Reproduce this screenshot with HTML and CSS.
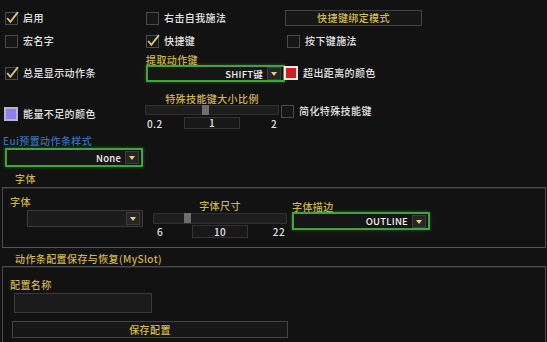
FILE: index.html
```html
<!DOCTYPE html>
<html lang="zh">
<head>
    <meta charset="UTF-8">
    <title>动作条设置</title>
    <link rel="stylesheet" href="styles.css">
</head>
<body>
    <div class="panel">
        <div class="row r1">
            <label class="opt c1"><span class="box"><svg viewBox="0 0 13 13"><path d="M2 6.5 L5 10 L12 1"/></svg></span>启用</label>
            <label class="opt c2"><span class="box"></span>右击自我施法</label>
            <button class="btn bind">快捷键绑定模式</button>
        </div>

        <div class="row r2">
            <label class="opt c1"><span class="box"></span>宏名字</label>
            <label class="opt c2"><span class="box"><svg viewBox="0 0 13 13"><path d="M2 6.5 L5 10 L12 1"/></svg></span>快捷键</label>
            <label class="opt c3"><span class="box"></span>按下键施法</label>
        </div>

        <div class="row r3">
            <label class="opt c1 low"><span class="box"><svg viewBox="0 0 13 13"><path d="M2 6.5 L5 10 L12 1"/></svg></span>总是显示动作条</label>
            <div class="field c2">
                <div class="cap">提取动作键</div>
                <div class="drop green w-key"><span>SHIFT键</span><i class="arrow"></i></div>
            </div>
            <label class="opt c3 low swatch-opt"><span class="swatch red"></span>超出距离的颜色</label>
        </div>

        <div class="row r4">
            <label class="opt c1 swatch-opt power"><span class="swatch purple"></span>能量不足的颜色</label>
            <div class="field c2 scale">
                <div class="cap center">特殊技能键大小比例</div>
                <div class="slider"><span class="thumb thumb-scale"></span></div>
                <div class="values">
                    <span>0.2</span>
                    <span class="val">1</span>
                    <span class="right">2</span>
                </div>
            </div>
            <label class="opt c3 simple"><span class="box"></span>简化特殊技能键</label>
        </div>

        <div class="cap blue">Eui预置动作条样式</div>
        <div class="drop green w-style"><span>None</span><i class="arrow"></i></div>
    </div>

    <div class="sec-head">字体</div>
    <div class="sec font-sec">
        <div class="col font-name">
            <div class="cap">字体</div>
            <div class="drop plain w-font"><span></span><i class="arrow"></i></div>
        </div>
        <div class="col font-size">
            <div class="cap center">字体尺寸</div>
            <div class="slider"><span class="thumb thumb-size"></span></div>
            <div class="values">
                <span class="left">6</span>
                <span class="val">10</span>
                <span class="right">22</span>
            </div>
        </div>
        <div class="col font-outline">
            <div class="cap">字体描边</div>
            <div class="drop green w-outline"><span>OUTLINE</span><i class="arrow"></i></div>
        </div>
    </div>

    <div class="sec-head slot-head">动作条配置保存与恢复(MySlot)</div>
    <div class="sec slot-sec">
        <div class="cap">配置名称</div>
        <input class="name-input" type="text">
        <button class="btn save">保存配置</button>
    </div>
</body>
</html>
```

FILE: styles.css
```css
body {
    margin: 0;
    width: 547px;
    height: 342px;
    overflow: hidden;
    background-color: #121212;
    color: #e4e4e4;
    font-family: "Noto Sans CJK SC", "Noto Sans", sans-serif;
    font-size: 10px;
    font-weight: 500;
    letter-spacing: 0.4px;
}
.panel {
    padding: 10px 0 0 5px;
}
.row {
    display: flex;
}
.c1 { width: 141px; }
.c2 { width: 139px; }
.c3 { flex: 1; }

/* checkbox rows */
.opt {
    display: flex;
    align-items: center;
    gap: 5px;
    height: 14px;
    line-height: 14px;
}
.box {
    position: relative;
    width: 11px;
    height: 11px;
    border: 1px solid #4a4a4a;
    background-color: #161616;
    flex: none;
}
.box svg {
    position: absolute;
    left: -1px;
    top: -2px;
    width: 14px;
    height: 14px;
    fill: none;
    stroke: #d7c77a;
    stroke-width: 1.7;
}
.r1 {
    height: 16px;
    align-items: center;
}
.r2 {
    margin-top: 8px;
    height: 14px;
}
.r2 .c3 { padding-left: 2px; }
.r3 {
    margin-top: 6px;
    align-items: flex-end;
}
.low { margin-bottom: 2px; }
.r4 {
    margin-top: 11px;
    align-items: flex-start;
}

.btn {
    font-family: inherit;
    font-weight: 500;
    font-size: 10px;
    letter-spacing: 0.4px;
    color: #d8bd4e;
    background-color: #171717;
    border: 1px solid #444;
    padding: 0;
    cursor: pointer;
}
.bind {
    width: 137px;
    height: 16px;
    line-height: 14px;
}

/* captions */
.cap {
    color: #d2b44c;
    height: 12px;
    line-height: 12px;
}
.cap.center { text-align: center; }
.cap.blue {
    color: #3a6fb5;
    margin: 6px 0 1px -2px;
}

/* dropdowns */
.drop {
    display: flex;
    align-items: center;
    justify-content: flex-end;
    gap: 4px;
    box-sizing: border-box;
    background-color: #161616;
    padding-right: 2px;
    color: #f0f0f0;
    font-size: 9.5px;
    letter-spacing: 0.2px;
}
.drop.green {
    border: 2px solid #3fa53b;
    box-shadow: 0 0 3px rgba(80, 200, 70, 0.45);
}
.drop.plain {
    border: 1px solid #3a3a3a;
    background-color: #1c1c1c;
}
.arrow {
    position: relative;
    width: 14px;
    height: 13px;
    background-color: #262626;
    border: 1px solid #3c3c3c;
    box-sizing: border-box;
    flex: none;
}
.arrow::after {
    content: "";
    position: absolute;
    left: 3px;
    top: 4px;
    border-left: 3.5px solid transparent;
    border-right: 3.5px solid transparent;
    border-top: 4px solid #e3cf7c;
}
.w-key {
    width: 139px;
    height: 17px;
    margin-top: -1px;
}
.w-style {
    width: 138px;
    height: 19px;
}
.w-font {
    width: 116px;
    height: 17px;
    margin-top: 3px;
}
.w-outline {
    width: 138px;
    height: 18px;
}

/* swatches */
.swatch {
    width: 10px;
    height: 10px;
    border: 2px solid #cfcfcf;
    flex: none;
}
.swatch.red {
    background-color: #d11f1f;
    border-color: #e8e8e8;
}
.swatch.purple {
    background-color: #8c7ff0;
    border-color: #b8b0d8;
}
.power {
    margin-top: 14px;
    margin-left: -1px;
    width: 142px;
}
.r3 .c3 { margin-left: -1px; }

/* sliders */
.scale {
    margin-left: -1px;
    width: 134px;
}
.scale .cap { height: 11px; line-height: 11px; }
.slider {
    position: relative;
    height: 8px;
    margin-top: 1px;
    border: 1px solid #303030;
    background-color: #1d1d1d;
}
.thumb {
    position: absolute;
    top: -1px;
    width: 7px;
    height: 10px;
    background-color: #6e6e6e;
}
.thumb-scale { left: 56px; }
.thumb-size { left: 30px; }
.values {
    display: grid;
    grid-template-columns: 1fr 56px 1fr;
    align-items: center;
    margin-top: 2px;
    line-height: 11px;
}
.values span:first-child { padding-left: 2px; }
.values .right {
    text-align: right;
    padding-right: 2px;
}
.val {
    border: 1px solid #333;
    background-color: #181818;
    text-align: center;
    height: 10px;
    line-height: 10px;
}
.simple {
    margin-top: 11px;
    padding-left: 2px;
}

/* framed sections */
.sec-head {
    height: 20px;
    padding-left: 15px;
    color: #d2b44c;
    line-height: 23px;
    box-sizing: border-box;
}
.slot-head {
    height: 18px;
    line-height: 21px;
}
.sec {
    margin: 0 1px 0 2px;
    border: 1px solid #4a4a4a;
    border-bottom: 1px solid #555;
    box-shadow: inset 0 1px 0 #262626;
}
.font-sec {
    display: flex;
    align-items: flex-start;
    height: 61px;
    padding-top: 9px;
    box-sizing: border-box;
}
.font-name {
    width: 150px;
    padding-left: 7px;
    box-sizing: border-box;
}
.font-name .cap { height: 10px; line-height: 10px; }
.font-name .drop { margin-left: 17px; }
.font-size {
    width: 134px;
    margin-top: 4px;
}
.font-size .cap { height: 10px; line-height: 10px; }
.font-size .slider { height: 9px; margin-top: 2px; }
.font-size .values { margin-top: 1px; }
.font-size .val { height: 11px; line-height: 11px; }
.font-size .values .left { padding-left: 4px; }
.font-outline {
    margin: 5px 0 0 5px;
}
.font-outline .cap { height: 10px; line-height: 10px; }
.slot-sec {
    height: 90px;
    border-bottom: none;
    padding: 12px 0 0 7px;
    box-sizing: border-box;
}
.name-input {
    display: block;
    width: 138px;
    height: 20px;
    box-sizing: border-box;
    margin: 2px 0 0 4px;
    background-color: #1b1b1b;
    border: 1px solid #3a3a3a;
    outline: none;
}
.save {
    display: block;
    width: 276px;
    height: 17px;
    line-height: 15px;
    margin: 8px 0 0 2px;
}
```
